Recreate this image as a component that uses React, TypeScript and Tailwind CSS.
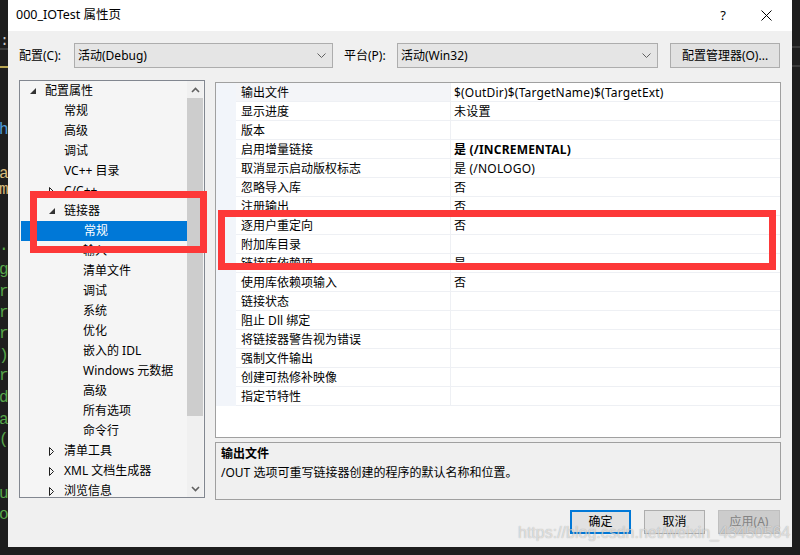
import React from "react";

const treeItems: { t: string; lvl: number; icon?: "exp" | "col"; sel?: boolean }[] = [
  { t: "配置属性", lvl: 0, icon: "exp" },
  { t: "常规", lvl: 1 },
  { t: "高级", lvl: 1 },
  { t: "调试", lvl: 1 },
  { t: "VC++ 目录", lvl: 1 },
  { t: "C/C++", lvl: 1, icon: "col" },
  { t: "链接器", lvl: 1, icon: "exp" },
  { t: "常规", lvl: 2, sel: true },
  { t: "输入", lvl: 2 },
  { t: "清单文件", lvl: 2 },
  { t: "调试", lvl: 2 },
  { t: "系统", lvl: 2 },
  { t: "优化", lvl: 2 },
  { t: "嵌入的 IDL", lvl: 2 },
  { t: "Windows 元数据", lvl: 2 },
  { t: "高级", lvl: 2 },
  { t: "所有选项", lvl: 2 },
  { t: "命令行", lvl: 2 },
  { t: "清单工具", lvl: 1, icon: "col" },
  { t: "XML 文档生成器", lvl: 1, icon: "col" },
  { t: "浏览信息", lvl: 1, icon: "col" },
];

const rows: { n: string; v: string; b?: boolean }[] = [
  { n: "输出文件", v: "$(OutDir)$(TargetName)$(TargetExt)" },
  { n: "显示进度", v: "未设置" },
  { n: "版本", v: "" },
  { n: "启用增量链接", v: "是 (/INCREMENTAL)", b: true },
  { n: "取消显示启动版权标志", v: "是 (/NOLOGO)" },
  { n: "忽略导入库", v: "否" },
  { n: "注册输出", v: "否" },
  { n: "逐用户重定向", v: "否" },
  { n: "附加库目录", v: "" },
  { n: "链接库依赖项", v: "是" },
  { n: "使用库依赖项输入", v: "否" },
  { n: "链接状态", v: "" },
  { n: "阻止 Dll 绑定", v: "" },
  { n: "将链接器警告视为错误", v: "" },
  { n: "强制文件输出", v: "" },
  { n: "创建可热修补映像", v: "" },
  { n: "指定节特性", v: "" },
];

const codeChars: { y: number; c: string; col: string }[] = [
  { y: 122, c: "h", col: "text-[#4d9bd6]" },
  { y: 166, c: "a", col: "text-[#d7ba7d]" },
  { y: 182, c: "m", col: "text-[#d7ba7d]" },
  { y: 238, c: ".", col: "text-[#57a64a]" },
  { y: 262, c: "g", col: "text-[#57a64a]" },
  { y: 284, c: "r", col: "text-[#57a64a]" },
  { y: 305, c: "r", col: "text-[#57a64a]" },
  { y: 326, c: "r", col: "text-[#57a64a]" },
  { y: 348, c: ")", col: "text-[#57a64a]" },
  { y: 368, c: "r", col: "text-[#57a64a]" },
  { y: 390, c: "d", col: "text-[#57a64a]" },
  { y: 412, c: "a", col: "text-[#57a64a]" },
  { y: 432, c: "(", col: "text-[#57a64a]" },
  { y: 486, c: "u", col: "text-[#57a64a]" },
  { y: 507, c: "o", col: "text-[#57a64a]" },
];

function ExpTri() {
  return (
    <svg width="6" height="6" viewBox="0 0 6 6" className="shrink-0">
      <polygon points="6,0 6,6 0,6" fill="#333" />
    </svg>
  );
}

function ColTri() {
  return (
    <svg width="6" height="9" viewBox="0 0 6 9" className="shrink-0">
      <polygon points="0.5,0.5 4.5,4.5 0.5,8.5" fill="none" stroke="#1e1e1e" strokeWidth="1" />
    </svg>
  );
}

function Chevron() {
  return (
    <svg width="9" height="5" viewBox="0 0 9 5">
      <polyline points="0.5,0.5 4.5,4.5 8.5,0.5" fill="none" stroke="#606060" strokeWidth="1" />
    </svg>
  );
}

export default function App() {
  return (
    <div className="relative w-[800px] h-[555px] overflow-hidden bg-[#1e1e1e] font-['Noto_Sans','Noto_Sans_CJK_SC',sans-serif] text-[12px] text-black">
      {/* background editor fragments */}
      <div className="absolute left-0 top-[48px] w-[8px] h-[2px] bg-[#3c3c3c]" />
      <div className="absolute left-0 top-[66px] w-[8px] h-[2px] bg-[#b8a552]" />
      <div className="absolute left-0 top-[34px] text-[#c8c8c8] font-['Liberation_Mono',monospace] text-[15px] leading-none">:</div>
      {codeChars.map((c, i) => (
        <div
          key={i}
          className={`absolute left-[-1px] font-['Liberation_Mono',monospace] text-[16px] leading-none ${c.col}`}
          style={{ top: c.y }}
        >
          {c.c}
        </div>
      ))}
      <div className="absolute right-0 top-[46px] w-[8px] h-[2px] bg-[#3a3a3a]" />
      <div className="absolute right-0 top-[65px] w-[8px] h-[2px] bg-[#3a3a3a]" />

      {/* dialog window */}
      <div className="absolute left-[8px] top-0 w-[784px] h-[547px] flex flex-col bg-[#f0f0f0]">
        {/* title bar */}
        <div className="h-[31px] bg-white flex items-center pl-[8px] shrink-0">
          <span className="text-[12.5px] text-black">000_IOTest 属性页</span>
          <div className="flex-1" />
          <span className="text-[13px] mr-[35px] text-black">?</span>
          <svg width="11" height="11" viewBox="0 0 11 11" className="mr-[20px]">
            <path d="M0.5 0.5 L10.5 10.5 M10.5 0.5 L0.5 10.5" stroke="#000" strokeWidth="1" />
          </svg>
        </div>

        {/* config row */}
        <div className="flex items-center h-[25px] mt-[12px] pl-[11px] shrink-0">
          <span className="w-[55px]">配置(C):</span>
          <div className="w-[259px] h-[25px] border border-[#adadad] bg-[#e5e5e5] flex items-center pl-[3px] pr-[6px]">
            <span className="flex-1">活动(Debug)</span>
            <Chevron />
          </div>
          <span className="w-[53px] ml-[11px]">平台(P):</span>
          <div className="w-[261px] h-[25px] border border-[#adadad] bg-[#e5e5e5] flex items-center pl-[3px] pr-[6px]">
            <span className="flex-1">活动(Win32)</span>
            <Chevron />
          </div>
          <div className="w-[110px] h-[25px] ml-[12px] border border-[#adadad] bg-[#e1e1e1] flex items-center justify-center">
            配置管理器(O)...
          </div>
        </div>

        {/* main area */}
        <div className="flex mt-[12px] pl-[11px] shrink-0">
          {/* tree */}
          <div className="w-[186px] h-[418px] border border-[#828790] bg-[#f5f5f5] flex overflow-hidden">
            <div className="flex-1 flex flex-col overflow-hidden">
              {treeItems.map((it, i) => (
                <div
                  key={i}
                  className={`h-[20px] shrink-0 flex items-center whitespace-nowrap ${
                    it.sel ? "bg-[#0078d7] text-white ml-[1px]" : ""
                  }`}
                >
                  <div className={it.lvl === 0 ? "w-[10px] shrink-0" : it.lvl === 1 ? "w-[29px] shrink-0" : "w-[48px] shrink-0"} />
                  <div className="w-[15px] shrink-0 flex items-center">
                    {it.icon === "exp" ? <ExpTri /> : it.icon === "col" ? <ColTri /> : null}
                  </div>
                  <span>{it.t}</span>
                </div>
              ))}
            </div>
            <div className="w-[16px] mr-[1px] flex flex-col bg-[#f0f0f0]">
              <div className="h-[17px] flex items-center justify-center">
                <svg width="9" height="6" viewBox="0 0 9 6">
                  <polyline points="1,5 4.5,1.5 8,5" fill="none" stroke="#606060" strokeWidth="1.6" />
                </svg>
              </div>
              <div className="h-[318px] bg-[#cdcdcd]" />
              <div className="flex-1" />
              <div className="h-[17px] flex items-center justify-center">
                <svg width="9" height="6" viewBox="0 0 9 6">
                  <polyline points="1,1 4.5,4.5 8,1" fill="none" stroke="#606060" strokeWidth="1.6" />
                </svg>
              </div>
            </div>
          </div>

          {/* right column */}
          <div className="ml-[10px] w-[566px] flex flex-col">
            <div className="mt-[2px] h-[356px] border border-[#a0a0a0] bg-white flex flex-col overflow-hidden">
              {rows.map((r, i) => (
                <div key={i} className="h-[19px] shrink-0 flex">
                  <div className="w-[20px] shrink-0 bg-[#f2f5fa]" />
                  <div
                    className={`w-[215px] shrink-0 border-b border-r border-[#eef0f4] pl-[5px] pt-[1px] flex items-center whitespace-nowrap ${
                      i === 0 ? "bg-[#f4f5f8]" : ""
                    }`}
                  >
                    {r.n}
                  </div>
                  <div
                    className={`flex-1 border-b border-[#eef0f4] pl-[3px] pt-[1px] flex items-center whitespace-nowrap tracking-[0.2px] ${
                      r.b ? "font-bold" : ""
                    }`}
                  >
                    {r.v}
                  </div>
                </div>
              ))}
            </div>
            <div className="mt-[4px] h-[58px] border border-[#a0a0a0] bg-[#f0f0f0] pl-[5px] pt-[1px] flex flex-col">
              <div className="h-[19px] flex items-center font-bold">输出文件</div>
              <div className="h-[19px] flex items-center">/OUT 选项可重写链接器创建的程序的默认名称和位置。</div>
            </div>
          </div>
        </div>

        {/* buttons */}
        <div className="flex justify-end mt-[10px] pr-[12px] gap-[13px] shrink-0">
          <div className="w-[61px] h-[24px] border-2 border-[#0078d7] bg-[#e1e1e1] flex items-center justify-center">
            确定
          </div>
          <div className="w-[61px] h-[24px] border border-[#adadad] bg-[#e1e1e1] flex items-center justify-center">
            取消
          </div>
          <div className="w-[62px] h-[24px] border border-[#bfbfbf] bg-[#cccccc] text-[#838383] flex items-center justify-center">
            应用(A)
          </div>
        </div>
      </div>

      {/* red annotation boxes */}
      <div className="absolute left-[30px] top-[191px] w-[177px] h-[62px] border-[7px] border-[#fd3838]" />
      <div className="absolute left-[218px] top-[210px] w-[558px] h-[60px] border-[7px] border-[#fd3838]" />

      {/* watermark */}
      <div className="absolute left-[518px] top-[525px] font-['Liberation_Sans',sans-serif] text-[16px] leading-none text-white/60 [text-shadow:0_0_1px_rgba(0,0,0,0.35)]">
        https://blog.csdn.net/weixin_43450564
      </div>
    </div>
  );
}
